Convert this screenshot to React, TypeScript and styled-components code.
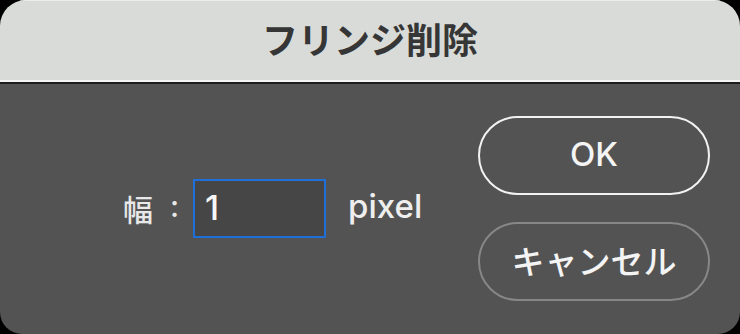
import styled, { createGlobalStyle } from "styled-components";

const GlobalStyle = createGlobalStyle`
  html, body {
    margin: 0;
    padding: 0;
    background: #000;
  }
  body {
    font-family: Inter, "Noto Sans CJK JP", sans-serif;
  }
`;

const App = () => {
  return (
    <>
      <GlobalStyle />
      <Window>
        <TitleBar>フリンジ削除</TitleBar>
        <Body>
          <FieldRow>
            <Label>幅</Label>
            <Colon>:</Colon>
            <NumberInput defaultValue="1" readOnly />
            <Unit>pixel</Unit>
          </FieldRow>
          <Buttons>
            <Button $primary>OK</Button>
            <Button>キャンセル</Button>
          </Buttons>
        </Body>
      </Window>
    </>
  );
};

export default App;

const Button = styled.button<{ $primary?: boolean }>`
  width: 232px;
  height: 79px;
  border-radius: 40px;
  border: 2px solid ${(p) => (p.$primary ? "#f2f2f2" : "#878787")};
  background: transparent;
  color: #f4f4f4;
  font-family: Inter, "Noto Sans CJK JP", sans-serif;
  font-weight: 500;
  font-size: 33px;
  padding: 0 0 2px;
  cursor: pointer;
`;

const Buttons = styled.div`
  display: flex;
  flex-direction: column;
  gap: 27px;
`;

const Unit = styled.span`
  font-size: 33px;
  font-weight: 500;
  color: #eeeeee;
  margin-left: 22px;
  padding-bottom: 4px;
`;

const NumberInput = styled.input`
  box-sizing: border-box;
  width: 133px;
  height: 59px;
  margin-left: 14px;
  border: 2px solid #1f6fd8;
  background: #464646;
  color: #f7f7f7;
  font-family: Inter, sans-serif;
  font-weight: 500;
  font-size: 34px;
  padding: 0 0 2px 10px;
  outline: none;
`;

const Colon = styled.span`
  font-size: 30px;
  font-weight: 500;
  color: #e8e8e8;
  margin-left: 17px;
  padding-bottom: 4px;
`;

const Label = styled.span`
  font-family: "Noto Sans CJK JP", sans-serif;
  font-size: 30px;
  font-weight: 500;
  color: #e8e8e8;
`;

const FieldRow = styled.div`
  flex: 1;
  display: flex;
  align-items: center;
  padding-left: 123px;
`;

const Body = styled.div`
  flex: 1;
  display: flex;
  align-items: center;
  background: #535353;
  border-top: 2px solid #1c1c1c;
  padding: 0 30px 2px 0;
`;

const TitleBar = styled.div`
  height: 82px;
  display: flex;
  align-items: center;
  justify-content: center;
  background: #d9dbd8;
  border-bottom: 2px solid #f3f3f3;
  box-shadow: inset 0 1px 0 #ececec;
  color: #363636;
  font-family: "Noto Sans CJK JP", sans-serif;
  font-weight: 700;
  font-size: 36px;
  padding-bottom: 4px;
  box-sizing: border-box;
`;

const Window = styled.div`
  width: 740px;
  height: 334px;
  display: flex;
  flex-direction: column;
  border-radius: 26px 26px 22px 22px;
  overflow: hidden;
`;
